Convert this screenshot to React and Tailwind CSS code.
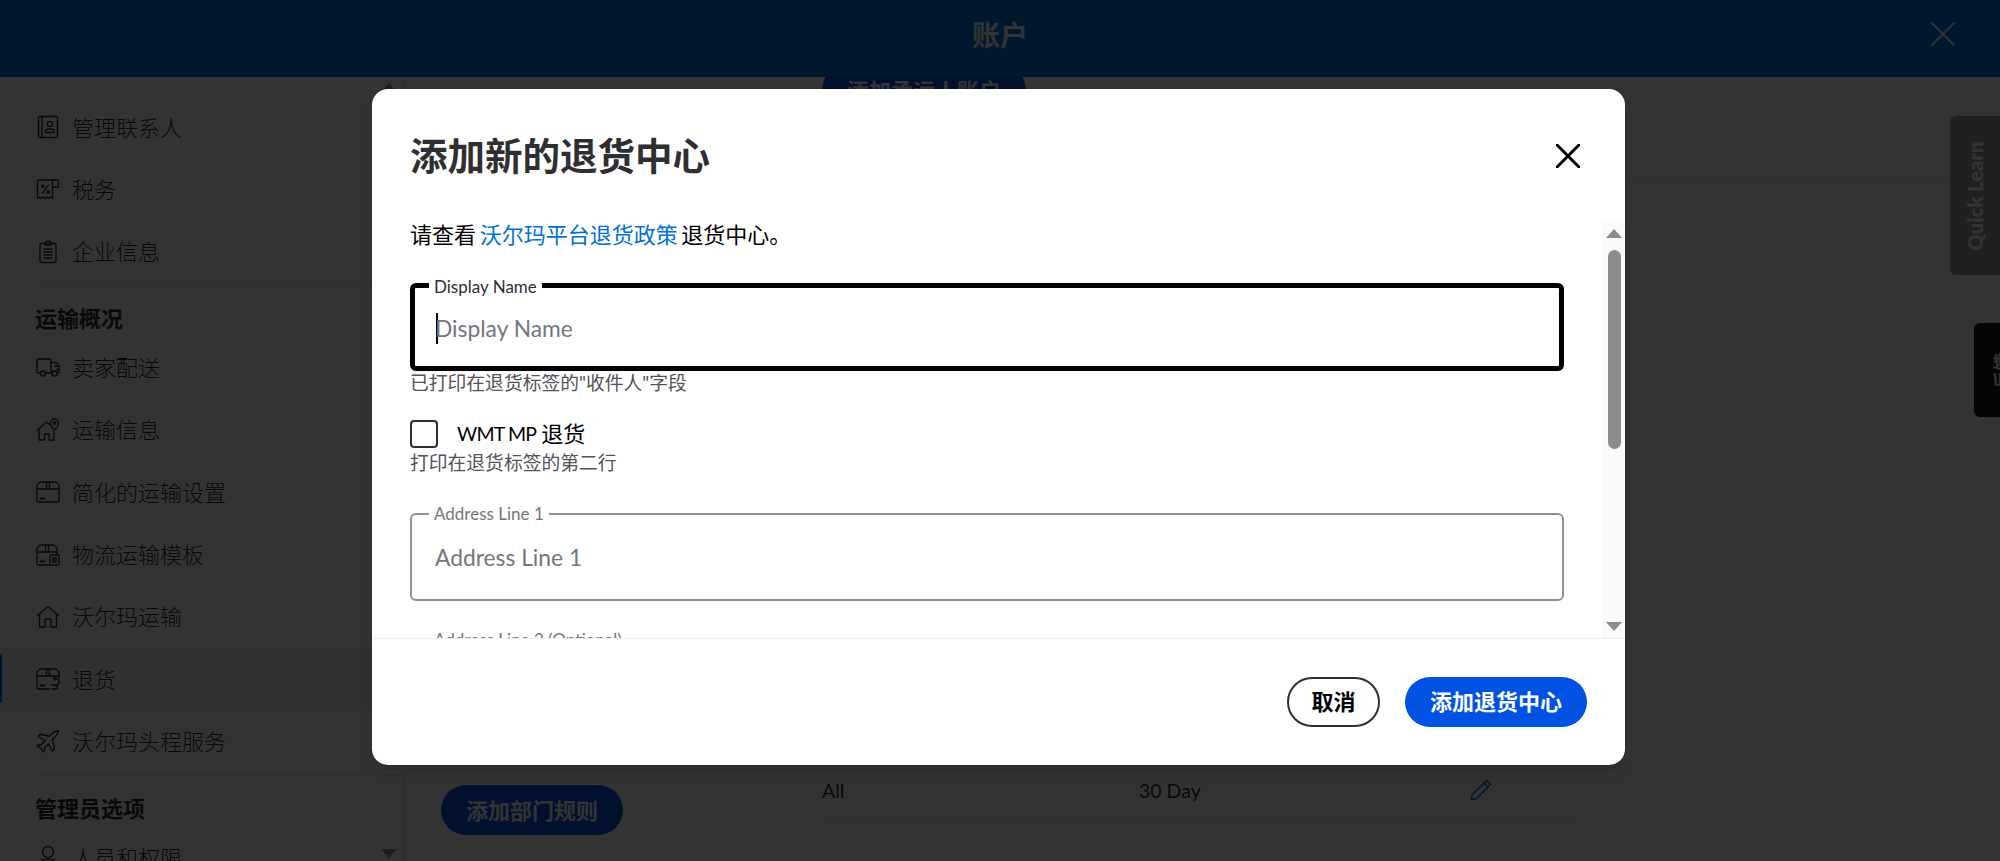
import React from 'react';

const fontStack = 'Lato, "Noto Sans CJK SC", sans-serif';

const iconProps = {
  width: 24,
  height: 24,
  viewBox: '0 0 24 24',
  fill: 'none',
  stroke: 'currentColor',
  strokeWidth: 1.4,
  strokeLinejoin: 'round',
  strokeLinecap: 'round',
};

const ContactsIcon = () => (
  <svg {...iconProps}>
    <rect x="2.5" y="1.5" width="19" height="21" rx="1" />
    <path d="M6 1.5v21" />
    <circle cx="13.8" cy="9" r="2.6" />
    <path d="M9.5 17.5v-1.2c0-1.4 1-2.3 2.4-2.3h3.8c1.4 0 2.4.9 2.4 2.3v1.2z" />
  </svg>
);
const TaxIcon = () => (
  <svg {...iconProps}>
    <path d="M21 2H3a1.500 1.500 0 0 0-1.500 1.500V20l1.500-1 1.500 1.500L6.500 19l2 1.500 2-1.500 2 1.500 2-1.500 2 1V3.500A1.500 1.500 0 0 1 19 2h2a1.500 1.500 0 0 1 1.500 1.500V9h-5" />
    <path d="M12.500 7 6.500 15" />
    <circle cx="6.800" cy="8.200" r="1.200" />
    <circle cx="12.200" cy="14" r="1.200" />
  </svg>
);
const BusinessIcon = () => (
  <svg {...iconProps}>
    <rect x="4" y="3.500" width="16" height="19" rx="1.500" />
    <path d="M9 3.500c0-1.500 1.200-2.500 3-2.500s3 1 3 2.500v1.500H9z" />
    <path d="M8 9h8M8 12h8M8 15h8M8 18h8" />
  </svg>
);
const TruckIcon = () => (
  <svg {...iconProps}>
    <path d="M4.500 18H2.500A1.500 1.500 0 0 1 1 16.500v-11A1.500 1.500 0 0 1 2.500 4h11A1.500 1.500 0 0 1 15 5.500V18H9.500" />
    <path d="M15 7.500h3.500c2.500 0 4.500 2 4.500 4.500v4.500a1.500 1.500 0 0 1-1.500 1.500H21M19 11h3M21 14.500h2" />
    <circle cx="7" cy="18.500" r="2.500" />
    <circle cx="18.500" cy="18.500" r="2.500" />
  </svg>
);
const ShippingInfoIcon = () => (
  <svg {...iconProps}>
    <path d="M1 12.500 10.500 4l3 2.500M3 11v11h5.500v-6h4.500v6h5v-8.500" />
    <path d="M18.500 12s-4-3.500-4-7a4 4 0 0 1 8 0c0 3.500-4 7-4 7z" />
    <circle cx="18.500" cy="5" r="1.200" />
  </svg>
);
const BoxIcon = () => (
  <svg {...iconProps}>
    <path d="M1 9h22M10.500 9V2M13.500 9V2" />
    <path d="M2.500 22A1.500 1.500 0 0 1 1 20.500V7c0-3 2-5 4.500-5h13C21 2 23 4 23 7v13.500a1.500 1.500 0 0 1-1.500 1.500z" />
    <path d="M4.500 18.500h4" strokeWidth="2" />
  </svg>
);
const TemplateIcon = () => (
  <svg {...iconProps}>
    <path d="M13 22H2.500A1.500 1.500 0 0 1 1 20.500V7c0-3 2-5 4.500-5h11c2.500 0 4.500 2 4.500 5v4" />
    <path d="M1 9h20M9.500 9V2M12.500 9V2" />
    <path d="M4.500 18.500h4" strokeWidth="2" />
    <rect x="14" y="12" width="9" height="10" rx="1" />
    <path d="M16.500 15h4M16.500 17h4M16.500 19h4" />
  </svg>
);
const HomeIcon = () => (
  <svg {...iconProps}>
    <path d="M1 11 12 1.500 23 11" />
    <path d="M3.500 9.500V22H9v-6.500a1.500 1.500 0 0 1 1.500-1.500h3a1.500 1.500 0 0 1 1.500 1.500V22h5.500V9.500" />
  </svg>
);
const ReturnsIcon = () => (
  <svg {...iconProps}>
    <path d="M13 22H2.500A1.500 1.500 0 0 1 1 20.500V7c0-3 2-5 4.500-5h13C21 2 23 4 23 7v4" />
    <path d="M1 9h22M10.500 9V2M13.500 9V2" />
    <path d="M4.500 18.500h4" strokeWidth="2" />
    <path d="M19.500 11.500h-2l1.500-1.500M17.500 11.500l1.500 1.500M19.500 11.500c2 0 3.500 1.300 3.500 3.200s-1.500 3.300-3.500 3.300h-3.500M16 22h3.500c1 0 2-.8 2-2s-1-2-2-2" />
  </svg>
);
const PlaneIcon = () => (
  <svg {...iconProps}>
    <path d="M22.500 1.500c-2-.5-4.500.3-6 1.800l-3 3-9.500-2L2 6.500l7 4-3.500 4H2.500L1 16l4 2 2 4 1.500-1.500v-3l4-3.500 4 7 2-2-2-9.500 3-3c1.500-1.500 3-4 2.500-6z" />
  </svg>
);
const UserIcon = () => (
  <svg {...iconProps}>
    <circle cx="12" cy="7" r="5.500" />
    <path d="M2.500 23v-2.500c0-3.500 2.500-6 6-6h7c3.500 0 6 2.500 6 6V23" />
  </svg>
);

const CloseIcon = ({ size = 24, width = 2 }) => (
  <svg width={size} height={size} viewBox="0 0 24 24" fill="none" stroke="currentColor" strokeWidth={width} strokeLinecap="round">
    <path d="M1 1l22 22M23 1 1 23" />
  </svg>
);

const NavItem = ({ icon, label, active }) => (
  <div className={`flex items-center h-[62.4px] pl-[36px] gap-[12px] text-[22px] font-light text-[#2e2f32] ${active ? 'bg-[#f0f5fb] relative' : ''}`}>
    {active && <span className="absolute left-0 top-[6px] bottom-[8px] w-[2px] bg-[#0071dc] rounded-r" />}
    {icon}
    <span>{label}</span>
  </div>
);

const Sidebar = () => (
  <aside className="w-[404px] shrink-0 border-r border-[#e3e4e5] h-full overflow-hidden relative">
    <div className="pt-[19px]">
      <NavItem icon={<ContactsIcon />} label="管理联系人" />
      <NavItem icon={<TaxIcon />} label="税务" />
      <NavItem icon={<BusinessIcon />} label="企业信息" />
      <div className="border-t border-[#e3e4e5] mt-[2px] ml-[35px]" />
      <div className="pl-[35px] pt-[18px] h-[50px] text-[22px] font-bold leading-[30px] text-[#2e2f32]">运输概况</div>
      <NavItem icon={<TruckIcon />} label="卖家配送" />
      <NavItem icon={<ShippingInfoIcon />} label="运输信息" />
      <NavItem icon={<BoxIcon />} label="简化的运输设置" />
      <NavItem icon={<TemplateIcon />} label="物流运输模板" />
      <NavItem icon={<HomeIcon />} label="沃尔玛运输" />
      <NavItem icon={<ReturnsIcon />} label="退货" active />
      <NavItem icon={<PlaneIcon />} label="沃尔玛头程服务" />
      <div className="border-t border-[#e3e4e5] mt-[2px] ml-[35px]" />
      <div className="pl-[35px] pt-[18px] h-[50px] text-[22px] font-bold leading-[30px] text-[#2e2f32]">管理员选项</div>
      <NavItem icon={<UserIcon />} label="人员和权限" />
    </div>
    <span className="absolute right-[6px] top-[6px] w-0 h-0 border-x-[8px] border-x-transparent border-b-[9px] border-b-[#909196]" />
    <span className="absolute right-[6px] bottom-[3px] w-0 h-0 border-x-[8px] border-x-transparent border-t-[9px] border-t-[#909196]" />
  </aside>
);

const Field = ({ label, placeholder, focused, caret }) => (
  <div className={`relative z-10 bg-white h-[88px] rounded-[6px] border-solid ${focused ? 'border-[5px] border-black shadow-[0_3px_0_0_#ffffff]' : 'border-2 border-[#909196]'}`}>
    <span className={`absolute ${focused ? 'left-[14px] -top-[11px] text-[#2e2f32]' : 'left-[17px] -top-[11px] text-[#74767c]'} px-[5px] bg-white text-[17px] leading-[20px]`}>
      {label}
    </span>
    <div className={`flex items-center h-full ${focused ? 'pt-[2px] pl-[21px]' : 'pl-[23px]'} text-[22.800px] text-[#74767c]`}>
      {caret && <span className="w-[2px] h-[31px] bg-black -mr-[3px]" />}
      {placeholder}
    </div>
  </div>
);

const Scrollbar = () => (
  <div className="w-[23px] shrink-0 bg-[#fafafa] flex flex-col items-center justify-between pt-[8px] pb-[7px] relative">
    <span className="w-0 h-0 border-x-[8px] border-x-transparent border-b-[9px] border-b-[#8c8c8c]" />
    <span className="absolute top-[29px] left-[6px] w-[13px] h-[199px] rounded-full bg-[#8c8c8c]" />
    <span className="w-0 h-0 border-x-[8px] border-x-transparent border-t-[9px] border-t-[#8c8c8c]" />
  </div>
);

const Modal = () => (
  <div className="w-[1253px] h-[676px] bg-white rounded-[16px] flex flex-col overflow-hidden shadow-lg">
    <div className="h-[132px] shrink-0 flex items-center justify-between pl-[38px] pr-[45px] pt-[2px]">
      <h2 className="text-[37.500px] font-bold text-[#2e2f32] leading-[48px]">添加新的退货中心</h2>
      <span className="text-black"><CloseIcon size={24} width={3} /></span>
    </div>
    <div className="flex flex-1 min-h-0 border-b border-[#eeeeee]">
      <div className="flex-1 min-w-0 overflow-hidden pl-[38px] pr-[38px]">
        <p className="text-[22px] leading-[30px] text-[#000000] mt-[-1px] mb-[33px] [word-spacing:-2px]">
          请查看 <span className="text-[#0071dc]">沃尔玛平台退货政策</span> 退货中心。
        </p>
        <Field label="Display Name" placeholder="Display Name" focused caret />
        <p className="text-[18.800px] leading-[24px] text-[#515357]">已打印在退货标签的"收件人"字段</p>
        <div className="flex items-center gap-[19px] mt-[24px]">
          <span className="w-[28px] h-[28px] border-2 border-[#2e2f32] rounded-[4px]" />
          <span className="flex items-center gap-[5px] text-[22px] leading-[30px] text-[#000000]">
            <span className="text-[19.500px] tracking-[-0.800px]">WMT MP</span>
            <span>退货</span>
          </span>
        </div>
        <p className="text-[18.800px] leading-[24px] text-[#515357] mt-[2px]">打印在退货标签的第二行</p>
        <div className="mt-[38px]">
          <Field label="Address Line 1" placeholder="Address Line 1" />
        </div>
        <div className="mt-[38px]">
          <Field label="Address Line 2 (Optional)" placeholder="Address Line 2 (Optional)" />
        </div>
      </div>
      <Scrollbar />
    </div>
    <div className="h-[126px] shrink-0 flex items-center justify-end gap-[25px] pr-[38px] pb-[1px]">
      <button className="h-[50px] w-[93px] rounded-full border-2 border-[#2e2f32] text-[22px] font-bold text-black bg-white">取消</button>
      <button className="h-[50px] w-[182px] rounded-full bg-[#0053e2] text-[22px] font-bold text-white">添加退货中心</button>
    </div>
  </div>
);

const App = () => (
  <div className="relative h-screen w-full overflow-hidden bg-white flex flex-col" style={{ fontFamily: fontStack }}>
    <header className="relative z-10 h-[77px] shrink-0 bg-[#0078e6] flex items-center justify-center text-white">
      <h1 className="text-[28px] font-bold leading-none pb-[8px]">账户</h1>
      <span className="absolute right-[45px] top-[22px]"><CloseIcon size={24} width={1.8} /></span>
    </header>

    <div className="flex flex-1 min-h-0">
      <Sidebar />
      <main className="flex-1 min-w-0 flex">
        <div className="w-[418px] shrink-0 pl-[37px] flex flex-col justify-end pb-[26px]">
          <button className="h-[50px] w-[182px] rounded-full bg-[#0053e2] text-[22px] font-bold text-white">添加部门规则</button>
        </div>
        <div className="w-[760px] shrink-0 flex flex-col justify-between pb-[42px]">
          <button className="-mt-[12px] h-[50px] w-[204px] rounded-full bg-[#0053e2] text-[22px] font-bold text-white">添加承运人账户</button>
          <div className="flex items-center h-[52px] pb-[4px] border-b border-[#e3e4e5] text-[19.500px] text-[#2e2f32]">
            <span className="w-[317px]">All</span>
            <span className="w-[331px]">30 Day</span>
            <svg width="22" height="22" viewBox="0 0 22 22" fill="none" stroke="#0071dc" strokeWidth="1.600" strokeLinejoin="round" className="mb-[2px]">
              <path d="M16.500 1.500 20.500 5.500 6 20 1.500 20.500 2 16z" />
              <path d="M14 4l4 4" />
            </svg>
          </div>
        </div>
        <div className="flex-1 border-t border-[#e3e4e5] mt-[100px]" />
      </main>
    </div>

    <div className="absolute right-0 top-[116px] w-[50px] h-[159px] rounded-l-[6px] bg-[#9ba0aa] flex items-center justify-center">
      <span className="-rotate-90 whitespace-nowrap text-[20px] font-extrabold text-white">Quick Learn</span>
    </div>
    <div className="absolute right-0 top-[323px] w-[26px] h-[94px] rounded-l-[6px] bg-[#1a1a1a] overflow-hidden flex items-center justify-start">
      <span className="-rotate-90 whitespace-nowrap text-[18px] font-bold text-white ml-[10px]">反馈</span>
    </div>

    <div className="absolute inset-0 z-20 bg-black/80 flex items-center justify-center pr-[3px] pb-[7px]">
      <Modal />
    </div>
  </div>
);

export default App;
